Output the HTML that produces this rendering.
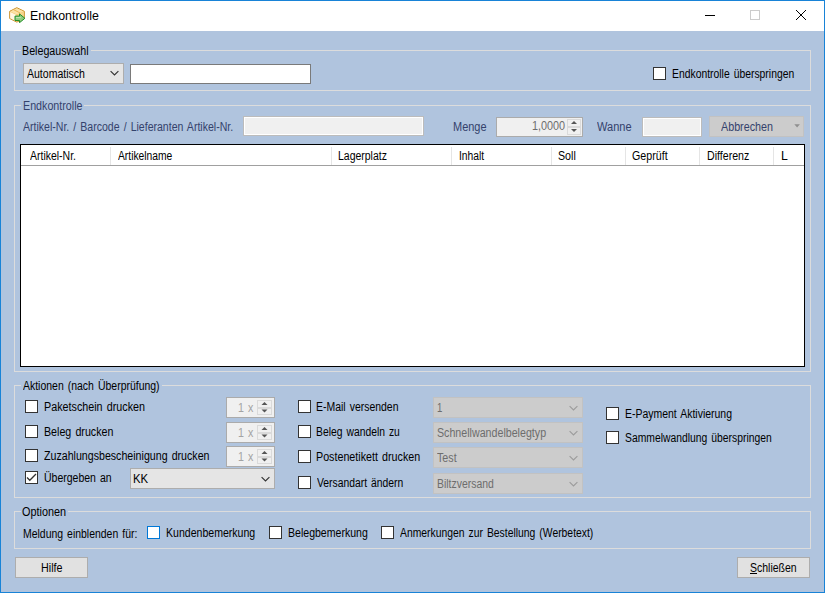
<!DOCTYPE html>
<html><head><meta charset="utf-8"><style>
html,body{margin:0;padding:0}
body{width:825px;height:593px;position:relative;overflow:hidden;background:#b0c4de;font-family:"Liberation Sans",sans-serif}
div,span,svg{position:absolute}
span{white-space:nowrap;line-height:14px;transform-origin:0 0;word-spacing:1.3px}
u{text-decoration:underline;text-underline-offset:1px}
</style></head><body>
<div style="left:0px;top:0px;width:825px;height:593px;border:1px solid #1883d7;box-sizing:border-box;background:#b0c4de"></div>
<div style="left:1px;top:1px;width:823px;height:30px;background:#fff"></div>
<div style="left:705px;top:15px;width:10px;height:1px;background:#000"></div>
<div style="left:750px;top:10px;width:10px;height:10px;border:1px solid #cccccc;box-sizing:border-box"></div>
<svg style="position:absolute;left:795px;top:9px" width="12" height="12" viewBox="0 0 12 12"><path d="M1 1L11 11M11 1L1 11" stroke="#000" stroke-width="1"/></svg>
<svg style="position:absolute;left:9px;top:7px" width="16" height="16" viewBox="0 0 16 16">
<path d="M7.8 0.7L15.3 4.3V11.5L7.8 15.1L0.7 11.5V4.3Z" fill="#f4c86e" stroke="#c98f2a" stroke-width="1"/>
<path d="M1.2 4.4L7.8 1.2L14.8 4.4L7.8 7.6Z" fill="#fbe2a6"/>
<path d="M1.2 4.9L7.6 7.9V14.5L1.2 11.3Z" fill="#fff6e2"/>
<path d="M8 7.9L14.8 4.8V11.2L8 14.5Z" fill="#f6d590"/>
<path d="M4.5 2.6L11.2 6" stroke="#e6b04e" stroke-width="0.9"/>
<path d="M7.8 7.6V14.8" stroke="#e7bb66" stroke-width="0.7"/>
<path d="M6 9.1H10.5V6.9L15.9 11.3L10.5 15.7V13.5H6Z" fill="#8fcc80" stroke="#25902a" stroke-width="1"/>
<path d="M7 10.6H11.8" stroke="#c2e6b8" stroke-width="1"/>
</svg>
<div style="left:14px;top:50px;width:797px;height:41px;border:1px solid #dcdcdc;box-sizing:border-box"></div>
<div style="left:21px;top:50px;width:70px;height:1px;background:#b0c4de"></div>
<div style="left:14px;top:105px;width:797px;height:267px;border:1px solid #dcdcdc;box-sizing:border-box"></div>
<div style="left:21px;top:105px;width:63px;height:1px;background:#b0c4de"></div>
<div style="left:14px;top:385px;width:797px;height:113px;border:1px solid #dcdcdc;box-sizing:border-box"></div>
<div style="left:21px;top:385px;width:141px;height:1px;background:#b0c4de"></div>
<div style="left:14px;top:511px;width:797px;height:38px;border:1px solid #dcdcdc;box-sizing:border-box"></div>
<div style="left:21px;top:511px;width:47px;height:1px;background:#b0c4de"></div>
<div style="left:23px;top:63px;width:101px;height:21px;background:#e5e5e5;border:1px solid #adadad;box-sizing:border-box"></div>
<svg style="position:absolute;left:110.3px;top:70.3px" width="10" height="7" viewBox="0 0 10 7"><path d="M0.6 1.2L4.5 5L8.4 1.2" fill="none" stroke="#333" stroke-width="1.15"/></svg>
<div style="left:130px;top:64px;width:181px;height:20px;background:#fff;border:1px solid #7a7a7a;box-sizing:border-box"></div>
<div style="left:653px;top:67px;width:13px;height:13px;background:#fff;border:1px solid #333;box-sizing:border-box"></div>
<div style="left:243px;top:116px;width:181px;height:20px;background:#f0f0f0;border:1px solid #bcbcbc;box-shadow:inset 0 0 0 1px #fff;box-sizing:border-box"></div>
<div style="left:642px;top:117px;width:60px;height:20px;background:#f0f0f0;border:1px solid #bcbcbc;box-shadow:inset 0 0 0 1px #fff;box-sizing:border-box"></div>
<div style="left:496px;top:117px;width:87px;height:20px;background:#f0f0f0;border:1px solid #ababab;box-sizing:border-box"></div>
<div style="left:567px;top:119px;width:14px;height:8px;border:1px solid #dadada;box-sizing:border-box"></div>
<div style="left:567px;top:127px;width:14px;height:8px;border:1px solid #dadada;box-sizing:border-box"></div>
<svg style="position:absolute;left:0;top:0" width="825" height="593"><path d="M571.0 124.0L574.0 121.0L577.0 124.0Z" fill="#555"/><path d="M571.0 129.0L574.0 132.0L577.0 129.0Z" fill="#555"/></svg>
<div style="left:709px;top:116px;width:95px;height:21px;background:#cccccc;border:1px solid #c2c2c2;box-sizing:border-box"></div>
<svg style="position:absolute;left:793.5px;top:124.4px" width="7" height="5" viewBox="0 0 7 5"><path d="M0.3 0.3L5.9 0.3L3.1 3.6Z" fill="#8f8f8f"/></svg>
<div style="left:20px;top:144px;width:785px;height:223px;background:#fff;border:1px solid #000;box-sizing:border-box"></div>
<div style="left:21px;top:165px;width:783px;height:1px;background:#a0a0a0"></div>
<div style="left:110px;top:147px;width:1px;height:18px;background:#e5e5e5"></div>
<div style="left:331px;top:147px;width:1px;height:18px;background:#e5e5e5"></div>
<div style="left:451px;top:147px;width:1px;height:18px;background:#e5e5e5"></div>
<div style="left:551px;top:147px;width:1px;height:18px;background:#e5e5e5"></div>
<div style="left:625px;top:147px;width:1px;height:18px;background:#e5e5e5"></div>
<div style="left:699px;top:147px;width:1px;height:18px;background:#e5e5e5"></div>
<div style="left:773px;top:147px;width:1px;height:18px;background:#e5e5e5"></div>
<div style="left:25px;top:400px;width:13px;height:13px;background:#fff;border:1px solid #333;box-sizing:border-box"></div>
<div style="left:25px;top:425px;width:13px;height:13px;background:#fff;border:1px solid #333;box-sizing:border-box"></div>
<div style="left:25px;top:449px;width:13px;height:13px;background:#fff;border:1px solid #333;box-sizing:border-box"></div>
<div style="left:25px;top:471px;width:13px;height:13px;background:#fff;border:1px solid #333;box-sizing:border-box"></div>
<svg style="position:absolute;left:25px;top:471px" width="13" height="13" viewBox="0 0 13 13"><path d="M2 6.5L4.8 9.3L11 3" fill="none" stroke="#333" stroke-width="1.3"/></svg>
<div style="left:226px;top:397px;width:49px;height:21px;background:#f0f0f0;border:1px solid #ababab;box-sizing:border-box"></div>
<div style="left:257px;top:400px;width:15px;height:8px;border:1px solid #dadada;box-sizing:border-box"></div>
<div style="left:257px;top:408px;width:15px;height:7px;border:1px solid #dadada;box-sizing:border-box"></div>
<svg style="position:absolute;left:0;top:0" width="825" height="593"><path d="M261.5 405.0L264.5 402.0L267.5 405.0Z" fill="#555"/><path d="M261.5 409.5L264.5 412.5L267.5 409.5Z" fill="#555"/></svg>
<div style="left:226px;top:422px;width:49px;height:21px;background:#f0f0f0;border:1px solid #ababab;box-sizing:border-box"></div>
<div style="left:257px;top:425px;width:15px;height:8px;border:1px solid #dadada;box-sizing:border-box"></div>
<div style="left:257px;top:433px;width:15px;height:7px;border:1px solid #dadada;box-sizing:border-box"></div>
<svg style="position:absolute;left:0;top:0" width="825" height="593"><path d="M261.5 430.0L264.5 427.0L267.5 430.0Z" fill="#555"/><path d="M261.5 434.5L264.5 437.5L267.5 434.5Z" fill="#555"/></svg>
<div style="left:226px;top:446px;width:49px;height:21px;background:#f0f0f0;border:1px solid #ababab;box-sizing:border-box"></div>
<div style="left:257px;top:449px;width:15px;height:8px;border:1px solid #dadada;box-sizing:border-box"></div>
<div style="left:257px;top:457px;width:15px;height:7px;border:1px solid #dadada;box-sizing:border-box"></div>
<svg style="position:absolute;left:0;top:0" width="825" height="593"><path d="M261.5 454.0L264.5 451.0L267.5 454.0Z" fill="#555"/><path d="M261.5 458.5L264.5 461.5L267.5 458.5Z" fill="#555"/></svg>
<div style="left:130px;top:468px;width:145px;height:21px;background:#e5e5e5;border:1px solid #adadad;box-sizing:border-box"></div>
<svg style="position:absolute;left:261.2px;top:475.5px" width="10" height="7" viewBox="0 0 10 7"><path d="M0.6 1.2L4.5 5L8.4 1.2" fill="none" stroke="#333" stroke-width="1.15"/></svg>
<div style="left:298px;top:400px;width:13px;height:13px;background:#fff;border:1px solid #333;box-sizing:border-box"></div>
<div style="left:298px;top:425px;width:13px;height:13px;background:#fff;border:1px solid #333;box-sizing:border-box"></div>
<div style="left:298px;top:450px;width:13px;height:13px;background:#fff;border:1px solid #333;box-sizing:border-box"></div>
<div style="left:298px;top:476px;width:13px;height:13px;background:#fff;border:1px solid #333;box-sizing:border-box"></div>
<div style="left:433px;top:397px;width:150px;height:21px;background:#cccccc;border:1px solid #c2c2c2;box-sizing:border-box"></div>
<svg style="position:absolute;left:569.3px;top:404.6px" width="10" height="7" viewBox="0 0 10 7"><path d="M0.6 1.2L4.5 5L8.4 1.2" fill="none" stroke="#9c9c9c" stroke-width="1.15"/></svg>
<div style="left:433px;top:422px;width:150px;height:21px;background:#cccccc;border:1px solid #c2c2c2;box-sizing:border-box"></div>
<svg style="position:absolute;left:569.3px;top:429.6px" width="10" height="7" viewBox="0 0 10 7"><path d="M0.6 1.2L4.5 5L8.4 1.2" fill="none" stroke="#9c9c9c" stroke-width="1.15"/></svg>
<div style="left:433px;top:447px;width:150px;height:21px;background:#cccccc;border:1px solid #c2c2c2;box-sizing:border-box"></div>
<svg style="position:absolute;left:569.3px;top:454.6px" width="10" height="7" viewBox="0 0 10 7"><path d="M0.6 1.2L4.5 5L8.4 1.2" fill="none" stroke="#9c9c9c" stroke-width="1.15"/></svg>
<div style="left:433px;top:473px;width:150px;height:21px;background:#cccccc;border:1px solid #c2c2c2;box-sizing:border-box"></div>
<svg style="position:absolute;left:569.3px;top:480.6px" width="10" height="7" viewBox="0 0 10 7"><path d="M0.6 1.2L4.5 5L8.4 1.2" fill="none" stroke="#9c9c9c" stroke-width="1.15"/></svg>
<div style="left:606px;top:407px;width:13px;height:13px;background:#fff;border:1px solid #333;box-sizing:border-box"></div>
<div style="left:606px;top:431px;width:13px;height:13px;background:#fff;border:1px solid #333;box-sizing:border-box"></div>
<div style="left:147px;top:526px;width:13px;height:13px;background:#fff;border:1px solid #0078d7;box-sizing:border-box"></div>
<div style="left:269px;top:526px;width:13px;height:13px;background:#fff;border:1px solid #333;box-sizing:border-box"></div>
<div style="left:381px;top:526px;width:13px;height:13px;background:#fff;border:1px solid #333;box-sizing:border-box"></div>
<div style="left:15px;top:557px;width:73px;height:21px;background:#e1e1e1;border:1px solid #adadad;box-sizing:border-box"></div>
<div style="left:737px;top:557px;width:73px;height:21px;background:#e1e1e1;border:1px solid #adadad;box-sizing:border-box"></div>
<span style="left:30.27px;top:9px;font-size:12px;color:#000;transform:scaleX(1.0308)">Endkontrolle</span>
<span style="left:22.11px;top:44px;font-size:12px;color:#000;transform:scaleX(0.8904)">Belegauswahl</span>
<span style="left:27.00px;top:67px;font-size:12px;color:#000;transform:scaleX(0.8769)">Automatisch</span>
<span style="left:671.74px;top:67px;font-size:12px;color:#000;transform:scaleX(0.8643)">Endkontrolle überspringen</span>
<span style="left:22.91px;top:99px;font-size:12px;color:#34426c;transform:scaleX(0.8923)">Endkontrolle</span>
<span style="left:23.00px;top:120px;font-size:12px;color:#34426c;transform:scaleX(0.8782)">Artikel-Nr. / Barcode / Lieferanten Artikel-Nr.</span>
<span style="left:452.99px;top:120px;font-size:12px;color:#34426c;transform:scaleX(0.9143)">Menge</span>
<span style="left:531.90px;top:119px;font-size:12px;color:#6d6d6d;transform:scaleX(0.9029)">1,0000</span>
<span style="left:597.30px;top:120px;font-size:12px;color:#34426c;transform:scaleX(0.9189)">Wanne</span>
<span style="left:721.00px;top:120px;font-size:12px;color:#34426c;transform:scaleX(0.8947)">Abbrechen</span>
<span style="left:30.10px;top:149px;font-size:12px;color:#000;transform:scaleX(0.8731)">Artikel-Nr.</span>
<span style="left:118.00px;top:149px;font-size:12px;color:#000;transform:scaleX(0.8571)">Artikelname</span>
<span style="left:338.33px;top:149px;font-size:12px;color:#000;transform:scaleX(0.8727)">Lagerplatz</span>
<span style="left:458.94px;top:149px;font-size:12px;color:#000;transform:scaleX(0.8571)">Inhalt</span>
<span style="left:558.31px;top:149px;font-size:12px;color:#000;transform:scaleX(0.8889)">Soll</span>
<span style="left:631.61px;top:149px;font-size:12px;color:#000;transform:scaleX(0.8897)">Geprüft</span>
<span style="left:706.62px;top:149px;font-size:12px;color:#000;transform:scaleX(0.8848)">Differenz</span>
<span style="left:780.58px;top:149px;font-size:12px;color:#000;transform:scaleX(1.0200)">L</span>
<span style="left:23.20px;top:379px;font-size:12px;color:#000;transform:scaleX(0.8718)">Aktionen (nach Überprüfung)</span>
<span style="left:43.50px;top:400px;font-size:12px;color:#000;transform:scaleX(0.8964)">Paketschein drucken</span>
<span style="left:43.51px;top:425px;font-size:12px;color:#000;transform:scaleX(0.8895)">Beleg drucken</span>
<span style="left:44.40px;top:449px;font-size:12px;color:#000;transform:scaleX(0.8860)">Zuzahlungsbescheinigung drucken</span>
<span style="left:43.52px;top:471px;font-size:12px;color:#000;transform:scaleX(0.8750)">Übergeben an</span>
<span style="left:133.25px;top:472px;font-size:12px;color:#000;transform:scaleX(0.9467)">KK</span>
<span style="left:237.91px;top:401px;font-size:12px;color:#a3a3a3;transform:scaleX(0.8875)">1 x</span>
<span style="left:237.91px;top:426px;font-size:12px;color:#a3a3a3;transform:scaleX(0.8875)">1 x</span>
<span style="left:237.91px;top:450px;font-size:12px;color:#a3a3a3;transform:scaleX(0.8875)">1 x</span>
<span style="left:316.43px;top:400px;font-size:12px;color:#000;transform:scaleX(0.8710)">E-Mail versenden</span>
<span style="left:316.44px;top:425px;font-size:12px;color:#000;transform:scaleX(0.8615)">Beleg wandeln zu</span>
<span style="left:316.41px;top:450px;font-size:12px;color:#000;transform:scaleX(0.8930)">Postenetikett drucken</span>
<span style="left:317.30px;top:476px;font-size:12px;color:#000;transform:scaleX(0.8626)">Versandart ändern</span>
<span style="left:437.20px;top:401px;font-size:12px;color:#6d6d6d;transform:scaleX(0.8000)">1</span>
<span style="left:436.51px;top:426px;font-size:12px;color:#6d6d6d;transform:scaleX(0.8884)">Schnellwandelbelegtyp</span>
<span style="left:437.40px;top:451px;font-size:12px;color:#6d6d6d;transform:scaleX(0.8909)">Test</span>
<span style="left:436.53px;top:477px;font-size:12px;color:#6d6d6d;transform:scaleX(0.8688)">Biltzversand</span>
<span style="left:624.53px;top:407px;font-size:12px;color:#000;transform:scaleX(0.8719)">E-Payment Aktivierung</span>
<span style="left:624.54px;top:431px;font-size:12px;color:#000;transform:scaleX(0.8627)">Sammelwandlung überspringen</span>
<span style="left:21.80px;top:505px;font-size:12px;color:#000;transform:scaleX(0.9043)">Optionen</span>
<span style="left:23.43px;top:527px;font-size:12px;color:#000;transform:scaleX(0.8705)">Meldung einblenden für:</span>
<span style="left:165.82px;top:526px;font-size:12px;color:#000;transform:scaleX(0.8800)">Kundenbemerkung</span>
<span style="left:287.92px;top:526px;font-size:12px;color:#000;transform:scaleX(0.8798)">Belegbemerkung</span>
<span style="left:400.10px;top:526px;font-size:12px;color:#000;transform:scaleX(0.8637)">Anmerkungen zur Bestellung (Werbetext)</span>
<span style="left:40.70px;top:561px;font-size:12px;color:#000;transform:scaleX(0.8955)">Hilfe</span>
<span style="left:749.92px;top:561px;font-size:12px;color:#000;transform:scaleX(0.8750)"><u>S</u>chließen</span>
</body></html>
